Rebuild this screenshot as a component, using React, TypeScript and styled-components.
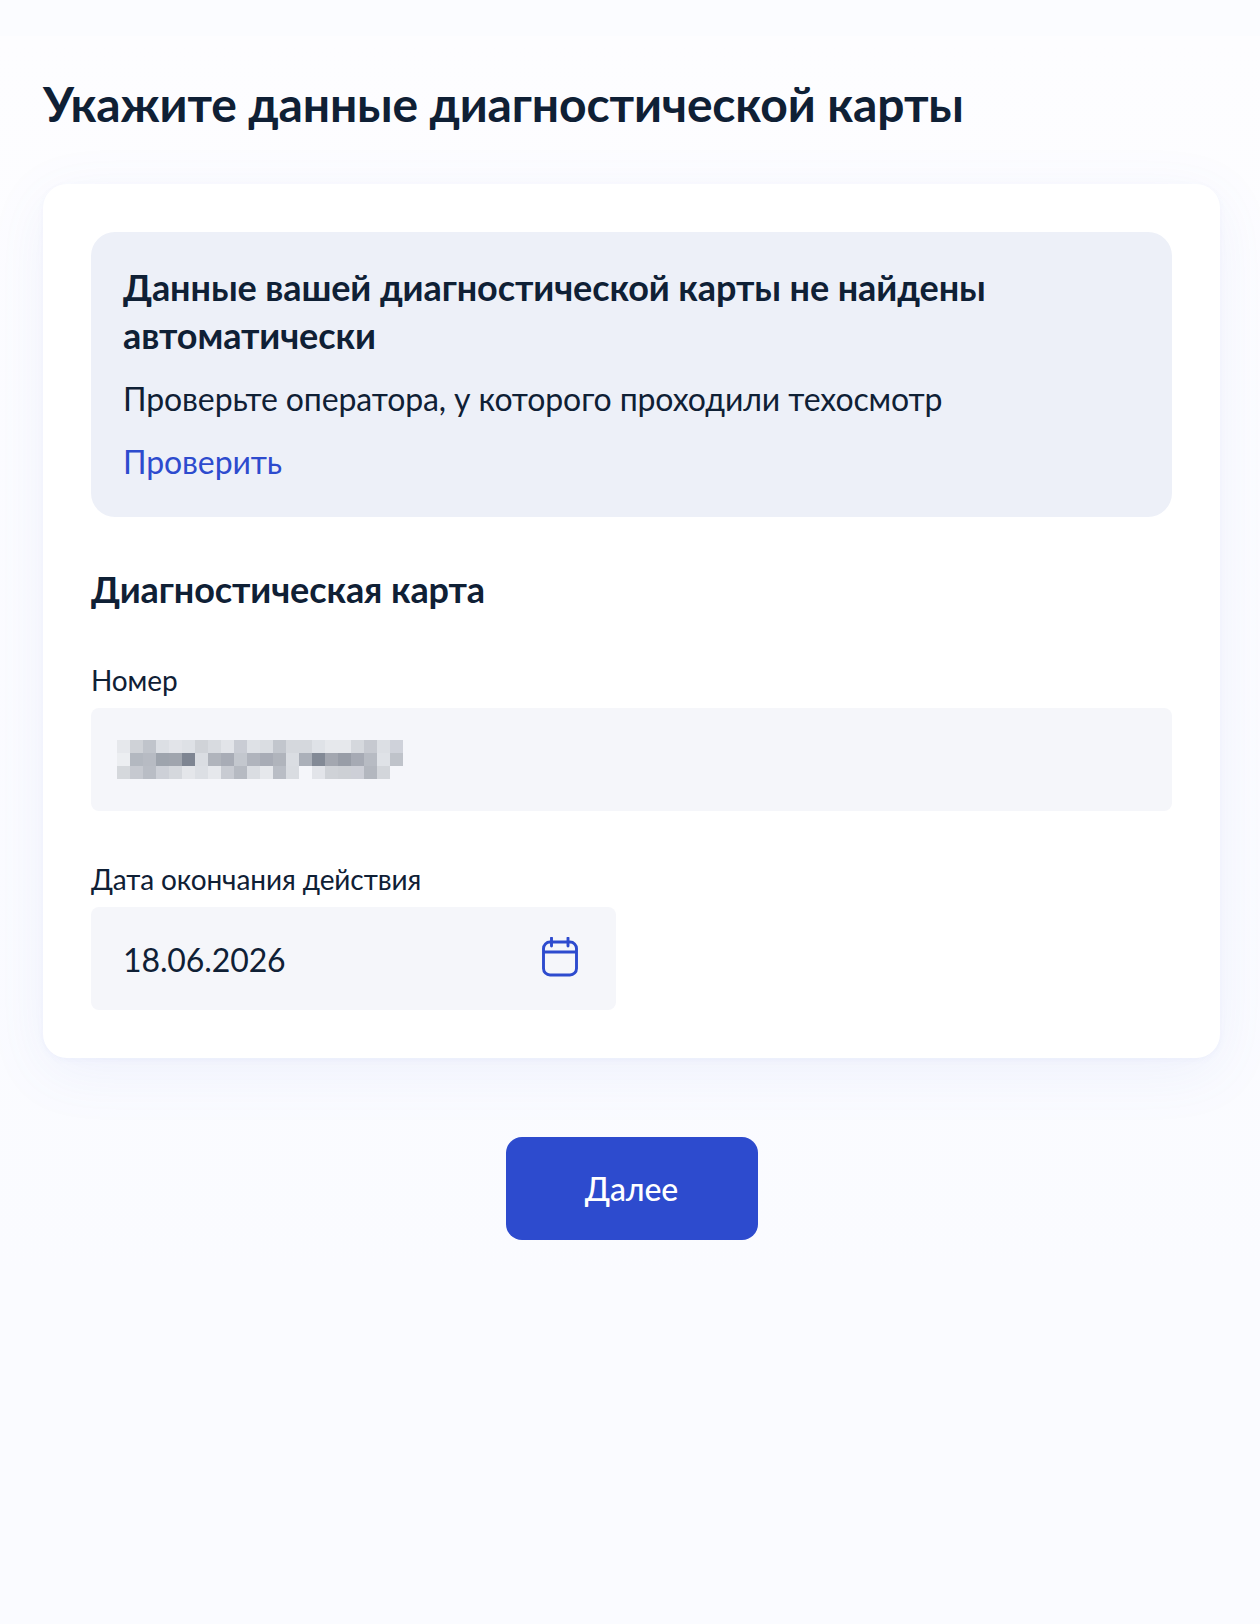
import styled, { createGlobalStyle } from 'styled-components';

const GlobalStyle = createGlobalStyle`
    html, body {
        margin: 0;
        padding: 0;
        background: #fafbff;
    }
    body {
        font-family: Lato, "Noto Sans", sans-serif;
        color: #0f2035;
        letter-spacing: -0.1px;
    }
`;

// blurred card number, one row per line of mosaic cells
const mosaic = [
    ['#e6e8ec', '#cfd2d7', '#c0c4cb', '#dcdfe4', '#e2e4e9', '#dee1e6', '#d0d3d8', '#d8dbe0', '#e2e4e9', '#c9ccd4', '#dee1e6', '#dadde2', '#c2c6cd', '#d5d8dd', '#d5d8dd', '#dfe2e7', '#e6e8ec', '#e6e8ec', '#d5d8dd', '#c6c9d0', '#dcdfe4', '#cfd2da'],
    ['#eceef1', '#b3b8c0', '#b7bbc3', '#9ea4ad', '#a0a5ae', '#7e8592', '#dadde2', '#b0b4bc', '#a8acb6', '#c3c7ce', '#b0b4bd', '#a8acb6', '#b0b4bc', '#dadde2', '#abb0b9', '#838a96', '#a3a7b0', '#989da7', '#a6aab4', '#b7bbc3', '#dfe2e7', '#bfc3ca'],
    ['#d5d8dc', '#c6c9d0', '#b9bdc5', '#cdd0d7', '#d5d8dd', '#e4e6ea', '#dcdfe4', '#e6e8ec', '#c8cbd2', '#b6bac2', '#dadde2', '#e6e8ec', '#b9bdc5', '#d9dce1', 'none', '#e2e4e9', '#cfd2d7', '#cdd0d5', '#cdcfd7', '#b3b7bf', '#d3d6db', 'none'],
];

const CELL = 13;

const BlurredNumber = () => (
    <svg width={CELL * 22} height={CELL * 3} style={{ display: 'block' }}>
        {mosaic.map((row, y) =>
            row.map((fill, x) => (
                <rect key={`${x}-${y}`} x={x * CELL} y={y * CELL} width={CELL} height={CELL} fill={fill} />
            ))
        )}
    </svg>
);

const CalendarIcon = () => (
    <Styled.Icon width="36" height="40" viewBox="0 0 36 40" fill="none" stroke="#2d4bce" strokeWidth="2.9">
        <rect x="1.5" y="5" width="33" height="33" rx="6.5" />
        <path d="M1.5 15h33" />
        <path d="M9.5 1v8M26 1v8" strokeLinecap="round" />
    </Styled.Icon>
);

export default function App() {
    return (
        <>
            <GlobalStyle />
            <Styled.Page>
                <Styled.Title>Укажите данные диагностической карты</Styled.Title>
                <Styled.Card>
                    <Styled.Notice>
                        <Styled.NoticeTitle>
                            Данные вашей диагностической карты не найдены автоматически
                        </Styled.NoticeTitle>
                        <Styled.NoticeText>Проверьте оператора, у которого проходили техосмотр</Styled.NoticeText>
                        <Styled.NoticeLink href="#">Проверить</Styled.NoticeLink>
                    </Styled.Notice>
                    <Styled.SectionTitle>Диагностическая карта</Styled.SectionTitle>
                    <Styled.Field>
                        <Styled.Label>Номер</Styled.Label>
                        <Styled.Input>
                            <BlurredNumber />
                        </Styled.Input>
                    </Styled.Field>
                    <Styled.Field $narrow>
                        <Styled.Label>Дата окончания действия</Styled.Label>
                        <Styled.Input $spread>
                            <Styled.Value>18.06.2026</Styled.Value>
                            <CalendarIcon />
                        </Styled.Input>
                    </Styled.Field>
                </Styled.Card>
                <Styled.Actions>
                    <Styled.NextButton>Далее</Styled.NextButton>
                </Styled.Actions>
            </Styled.Page>
        </>
    );
}

const Styled = {
    Page: styled.div`
        min-height: 1624px;
        box-sizing: border-box;
        padding: 80px 40px 0 43px;
        background: linear-gradient(#fbfcff 0, #fbfcff 36px, #fdfdff 36px, #fafbff 1280px);
    `,
    Title: styled.h1`
        margin: 0 0 56px;
        font-size: 48px;
        line-height: 48px;
        font-weight: 700;
        letter-spacing: -0.15px;
    `,
    Card: styled.div`
        box-sizing: border-box;
        height: 874px;
        padding: 48px;
        background: #fff;
        border-radius: 24px;
        box-shadow: 0 2px 6px rgba(90, 120, 220, 0.05), 0 14px 60px rgba(90, 120, 220, 0.08);
    `,
    Notice: styled.div`
        box-sizing: border-box;
        height: 285px;
        padding: 31px 32px;
        background: #edf0f8;
        border-radius: 24px;
    `,
    NoticeTitle: styled.div`
        font-size: 36px;
        line-height: 48px;
        font-weight: 700;
    `,
    NoticeText: styled.div`
        margin-top: 16px;
        font-size: 32px;
        line-height: 48px;
    `,
    NoticeLink: styled.a`
        display: block;
        margin-top: 15px;
        font-size: 32px;
        line-height: 48px;
        color: #2d4bce;
        text-decoration: none;
    `,
    SectionTitle: styled.h2`
        margin: 48px 0 0;
        font-size: 36px;
        line-height: 48px;
        font-weight: 700;
    `,
    Field: styled.div<{ $narrow?: boolean }>`
        width: ${(p) => (p.$narrow ? '525px' : '100%')};
        margin-top: ${(p) => (p.$narrow ? '50px' : '49px')};
    `,
    Label: styled.div`
        margin-bottom: 10px;
        font-size: 28px;
        line-height: 36px;
    `,
    Input: styled.div<{ $spread?: boolean }>`
        box-sizing: border-box;
        height: 103px;
        padding: ${(p) => (p.$spread ? '0 38px 0 32px' : '0 26px')};
        display: flex;
        align-items: center;
        justify-content: ${(p) => (p.$spread ? 'space-between' : 'flex-start')};
        background: #f5f6fa;
        border-radius: 8px;
    `,
    Value: styled.span`
        padding-top: 2px;
        font-size: 32px;
    `,
    Icon: styled.svg`
        margin-bottom: 4px;
    `,
    Actions: styled.div`
        margin-top: 79px;
        display: flex;
        justify-content: center;
    `,
    NextButton: styled.button`
        width: 252px;
        height: 103px;
        border: 0;
        border-radius: 16px;
        background: #2d4bce;
        color: #fff;
        font-family: inherit;
        font-size: 32px;
        font-weight: 500;
        letter-spacing: -0.1px;
    `,
};
